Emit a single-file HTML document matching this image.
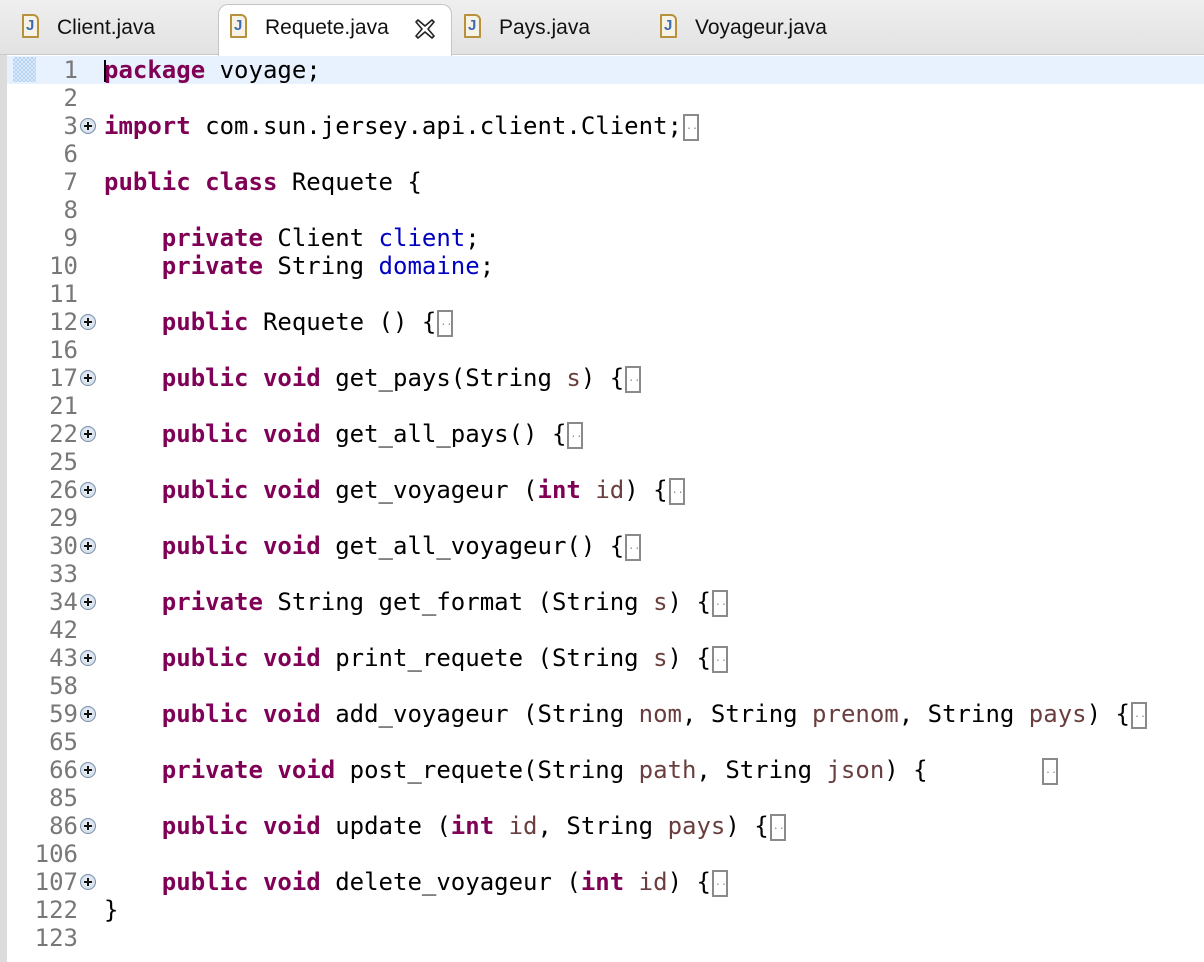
<!DOCTYPE html>
<html><head><meta charset="utf-8"><style>
body{margin:0;width:1204px;height:962px;background:#fff;overflow:hidden;position:relative;font-family:"DejaVu Sans Mono","Liberation Mono",monospace;}
.tabbar{position:absolute;left:0;top:0;width:1204px;height:54px;background:linear-gradient(#efefef,#e2e2e2);border-bottom:1px solid #c8c8c8;}
.tab{position:absolute;top:12px;height:34px;font-family:"Liberation Sans",sans-serif;font-size:21px;color:#111;line-height:32px;}
.act{position:absolute;left:218px;top:4px;width:232px;height:51px;background:#fff;border:1px solid #c4c4c4;border-bottom:none;border-radius:10px 10px 0 0;}
.ji{display:inline-block;width:13px;height:20px;border:2px solid #b8913c;border-radius:1px 6px 1px 1px;background:#f6f2e6;vertical-align:-4px;margin-right:18px;position:relative;}
.ji:after{content:"J";position:absolute;left:2px;top:1px;font:bold 15px/17px "Liberation Sans",sans-serif;color:#3b6cb0;}
.lb{position:absolute;left:0;top:55px;width:7px;height:907px;background:#dcdcdc;}
.hl{position:absolute;left:7px;top:56px;width:1197px;height:28px;background:#e8f2fe;}
.ov{position:absolute;left:13px;top:57px;width:23px;height:25px;background:repeating-conic-gradient(#b8d4f4 0 25%,#dbe8f8 0 50%) 0 0/4px 4px;}
.r{position:absolute;left:0;height:28px;line-height:28px;font-size:24px;white-space:pre;color:#000;}
.n{position:absolute;width:78px;text-align:right;color:#787878;}
.c{position:absolute;left:104px;}
.k{color:#7f0055;font-weight:bold}.f{color:#0000c0}.p{color:#6a3e3e}
.fd{position:absolute;left:80px;top:6px;width:14px;height:14px;border:1px solid #7a8ea8;border-radius:50%;background:radial-gradient(#f4f8fc,#c6d4e4);}
.fd:before{content:"";position:absolute;left:3px;top:6px;width:8px;height:2px;background:#111;}
.fd:after{content:"";position:absolute;left:6px;top:3px;width:2px;height:8px;background:#111;}
.bx{display:inline-block;width:12px;height:23px;border:2px solid #8a8a8a;vertical-align:-7px;margin-left:1px;position:relative;}
.bx:after{content:"..";position:absolute;left:1px;top:4px;font-size:10px;line-height:14px;color:#8a8a8a;}
.cur{position:absolute;left:104px;top:60px;width:2px;height:22px;background:#000;}
</style></head><body>
<div class="tabbar"></div>
<div class="act"></div>
<div class="tab" style="left:22px"><span class="ji"></span>Client.java</div>
<div class="tab" style="left:230px"><span class="ji"></span>Requete.java<svg width="22" height="22" viewBox="0 0 22 22" style="position:absolute;left:184px;top:6px"><path d="M2 4 L4 2 L11 8 L18 2 L20 4 L14 11 L20 18 L18 20 L11 14 L4 20 L2 18 L8 11 Z" fill="none" stroke="#222" stroke-width="1.6" stroke-linejoin="round"/></svg></div>
<div class="tab" style="left:464px"><span class="ji"></span>Pays.java</div>
<div class="tab" style="left:660px"><span class="ji"></span>Voyageur.java</div>
<div class="lb"></div>
<div class="hl"></div><div class="ov"></div>

<div class="r" style="top:56px"><span class="n">1</span><span class="c"><span class="k">package</span> voyage;</span></div>
<div class="r" style="top:84px"><span class="n">2</span></div>
<div class="r" style="top:112px"><span class="n">3</span><span class="fd"></span><span class="c"><span class="k">import</span> com.sun.jersey.api.client.Client;<span class="bx"></span></span></div>
<div class="r" style="top:140px"><span class="n">6</span></div>
<div class="r" style="top:168px"><span class="n">7</span><span class="c"><span class="k">public class</span> Requete {</span></div>
<div class="r" style="top:196px"><span class="n">8</span></div>
<div class="r" style="top:224px"><span class="n">9</span><span class="c">    <span class="k">private</span> Client <span class="f">client</span>;</span></div>
<div class="r" style="top:252px"><span class="n">10</span><span class="c">    <span class="k">private</span> String <span class="f">domaine</span>;</span></div>
<div class="r" style="top:280px"><span class="n">11</span></div>
<div class="r" style="top:308px"><span class="n">12</span><span class="fd"></span><span class="c">    <span class="k">public</span> Requete () {<span class="bx"></span></span></div>
<div class="r" style="top:336px"><span class="n">16</span></div>
<div class="r" style="top:364px"><span class="n">17</span><span class="fd"></span><span class="c">    <span class="k">public void</span> get_pays(String <span class="p">s</span>) {<span class="bx"></span></span></div>
<div class="r" style="top:392px"><span class="n">21</span></div>
<div class="r" style="top:420px"><span class="n">22</span><span class="fd"></span><span class="c">    <span class="k">public void</span> get_all_pays() {<span class="bx"></span></span></div>
<div class="r" style="top:448px"><span class="n">25</span></div>
<div class="r" style="top:476px"><span class="n">26</span><span class="fd"></span><span class="c">    <span class="k">public void</span> get_voyageur (<span class="k">int</span> <span class="p">id</span>) {<span class="bx"></span></span></div>
<div class="r" style="top:504px"><span class="n">29</span></div>
<div class="r" style="top:532px"><span class="n">30</span><span class="fd"></span><span class="c">    <span class="k">public void</span> get_all_voyageur() {<span class="bx"></span></span></div>
<div class="r" style="top:560px"><span class="n">33</span></div>
<div class="r" style="top:588px"><span class="n">34</span><span class="fd"></span><span class="c">    <span class="k">private</span> String get_format (String <span class="p">s</span>) {<span class="bx"></span></span></div>
<div class="r" style="top:616px"><span class="n">42</span></div>
<div class="r" style="top:644px"><span class="n">43</span><span class="fd"></span><span class="c">    <span class="k">public void</span> print_requete (String <span class="p">s</span>) {<span class="bx"></span></span></div>
<div class="r" style="top:672px"><span class="n">58</span></div>
<div class="r" style="top:700px"><span class="n">59</span><span class="fd"></span><span class="c">    <span class="k">public void</span> add_voyageur (String <span class="p">nom</span>, String <span class="p">prenom</span>, String <span class="p">pays</span>) {<span class="bx"></span></span></div>
<div class="r" style="top:728px"><span class="n">65</span></div>
<div class="r" style="top:756px"><span class="n">66</span><span class="fd"></span><span class="c">    <span class="k">private void</span> post_requete(String <span class="p">path</span>, String <span class="p">json</span>) {</span><span class="bx" style="position:absolute;left:1041px;top:2px"></span></div>
<div class="r" style="top:784px"><span class="n">85</span></div>
<div class="r" style="top:812px"><span class="n">86</span><span class="fd"></span><span class="c">    <span class="k">public void</span> update (<span class="k">int</span> <span class="p">id</span>, String <span class="p">pays</span>) {<span class="bx"></span></span></div>
<div class="r" style="top:840px"><span class="n">106</span></div>
<div class="r" style="top:868px"><span class="n">107</span><span class="fd"></span><span class="c">    <span class="k">public void</span> delete_voyageur (<span class="k">int</span> <span class="p">id</span>) {<span class="bx"></span></span></div>
<div class="r" style="top:896px"><span class="n">122</span><span class="c">}</span></div>
<div class="r" style="top:924px"><span class="n">123</span></div>
<div class="cur"></div>
</body></html>
